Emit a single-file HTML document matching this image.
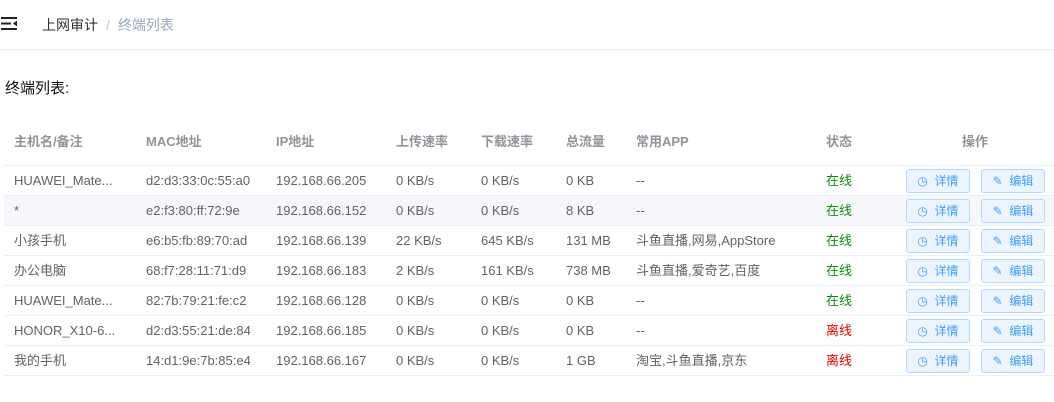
<!DOCTYPE html>
<html><head><meta charset="utf-8"><style>
*{margin:0;padding:0;box-sizing:border-box}
body{width:1054px;height:402px;background:#fff;font-family:"Liberation Sans","Noto Sans CJK SC",sans-serif;font-size:13px;color:#606266;position:relative;overflow:hidden}
.top{position:absolute;left:0;top:0;width:1054px;height:50px;border-bottom:1px solid #eef0f3;box-shadow:0 1px 3px rgba(0,0,0,.04)}
.bc{position:absolute;left:42px;top:0;line-height:50px;font-size:14px;color:#303133}
.bc .s{color:#c0c4cc;margin:0 8px}
.bc .c{color:#97a8be}
h3{position:absolute;left:5px;top:78px;line-height:22px;font-size:15px;font-weight:normal;color:#111}
.row{position:absolute;left:4px;width:1050px;height:30px;border-bottom:1px solid #ebeef5}
.row span{position:absolute;top:0;line-height:29px;white-space:nowrap}
.hd{top:120px;height:46px;font-weight:bold;color:#909399}
.hd span{line-height:44px}
.on{color:#138a13}.off{color:#e00}
.b{position:absolute;top:3px;height:24px;width:64px;border:1px solid #b3d8ff;background:#ecf5ff;color:#409eff;border-radius:3px;font-size:12px;line-height:22px;text-align:center}
</style></head><body>
<div class="top">
<svg style="position:absolute;left:1px;top:17px" width="17" height="13" viewBox="0 0 17 13"><g fill="#222"><rect x="0" y="0" width="16" height="2"/><rect x="0" y="5.5" width="10" height="2"/><rect x="0" y="11" width="16" height="2"/><path d="M16 3.5v6l-4-3z"/></g></svg>
<div class="bc">上网审计<span class="s">/</span><span class="c">终端列表</span></div>
</div>
<h3>终端列表:</h3>
<div class="row hd"><span style="left:10px">主机名/备注</span><span style="left:142px">MAC地址</span><span style="left:272px">IP地址</span><span style="left:392px">上传速率</span><span style="left:477px">下载速率</span><span style="left:562px">总流量</span><span style="left:632px">常用APP</span><span style="left:822px">状态</span><span style="left:958px">操作</span></div>
<div id="rows"></div>
<script>
var d=[["HUAWEI_Mate...","d2:d3:33:0c:55:a0","192.168.66.205","0 KB/s","0 KB/s","0 KB","--",1],
["*","e2:f3:80:ff:72:9e","192.168.66.152","0 KB/s","0 KB/s","8 KB","--",1],
["小孩手机","e6:b5:fb:89:70:ad","192.168.66.139","22 KB/s","645 KB/s","131 MB","斗鱼直播,网易,AppStore",1],
["办公电脑","68:f7:28:11:71:d9","192.168.66.183","2 KB/s","161 KB/s","738 MB","斗鱼直播,爱奇艺,百度",1],
["HUAWEI_Mate...","82:7b:79:21:fe:c2","192.168.66.128","0 KB/s","0 KB/s","0 KB","--",1],
["HONOR_X10-6...","d2:d3:55:21:de:84","192.168.66.185","0 KB/s","0 KB/s","0 KB","--",0],
["我的手机","14:d1:9e:7b:85:e4","192.168.66.167","0 KB/s","0 KB/s","1 GB","淘宝,斗鱼直播,京东",0]];
var x=[10,142,272,392,477,562,632],h="";
d.forEach(function(r,i){h+='<div class="row" style="top:'+(166+i*30)+'px;'+(i==1?'background:#f5f7fa':'')+'">';
for(var j=0;j<7;j++)h+='<span style="left:'+x[j]+'px">'+r[j]+'</span>';
h+='<span style="left:822px" class="'+(r[7]?'on':'off')+'">'+(r[7]?'在线':'离线')+'</span>';
h+='<div class="b" style="left:902px">◷ &nbsp;详情</div><div class="b" style="left:977px">✎ &nbsp;编辑</div></div>';});
document.getElementById('rows').innerHTML=h;
</script>
</body></html>
